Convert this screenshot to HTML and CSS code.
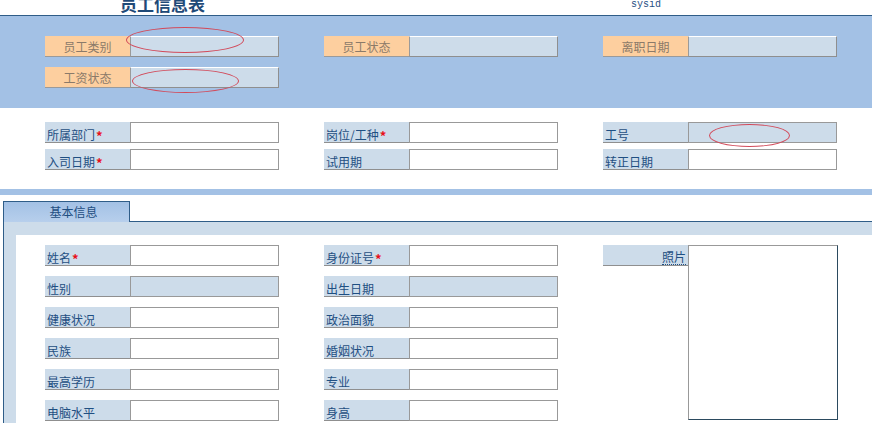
FILE: index.html
```html
<!DOCTYPE html>
<html lang="zh">
<head>
<meta charset="utf-8">
<link rel="stylesheet" href="styles.css">
</head>
<body>
<div class="header">
  <div class="title">员工信息表</div>
  <div class="sysid">sysid</div>
</div>
<div class="band">
  <div class="grid">
    <div class="field"><div class="hlabel">员工类别</div><div class="hinput"></div></div>
    <div class="field"><div class="hlabel">员工状态</div><div class="hinput"></div></div>
    <div class="field"><div class="hlabel">离职日期</div><div class="hinput"></div></div>
    <div class="field"><div class="hlabel">工资状态</div><div class="hinput"></div></div>
  </div>
</div>
<div class="main">
  <div class="grid tight">
    <div class="field"><div class="label">所属部门<span class="req">*</span></div><div class="input"></div></div>
    <div class="field"><div class="label">岗位/工种<span class="req">*</span></div><div class="input"></div></div>
    <div class="field"><div class="label">工号</div><div class="input ro"></div></div>
    <div class="field"><div class="label">入司日期<span class="req">*</span></div><div class="input"></div></div>
    <div class="field"><div class="label">试用期</div><div class="input"></div></div>
    <div class="field"><div class="label">转正日期</div><div class="input"></div></div>
  </div>
</div>
<div class="stripe"></div>
<div class="tabs">
  <div class="tabbar">
    <div class="tab">基本信息</div>
    <div class="tabline"></div>
  </div>
  <div class="panel">
    <div class="inner">
      <div class="grid rows">
        <div class="field"><div class="label">姓名<span class="req">*</span></div><div class="input"></div></div>
        <div class="field"><div class="label">身份证号<span class="req">*</span></div><div class="input"></div></div>
        <div class="photo"><div class="label plabel"><span class="dot">照片</span></div><div class="photobox"></div></div>
        <div class="field"><div class="label">性别</div><div class="input ro"></div></div>
        <div class="field"><div class="label">出生日期</div><div class="input ro"></div></div>
        <div class="field"><div class="label">健康状况</div><div class="input"></div></div>
        <div class="field"><div class="label">政治面貌</div><div class="input"></div></div>
        <div class="field"><div class="label">民族</div><div class="input"></div></div>
        <div class="field"><div class="label">婚姻状况</div><div class="input"></div></div>
        <div class="field"><div class="label">最高学历</div><div class="input"></div></div>
        <div class="field"><div class="label">专业</div><div class="input"></div></div>
        <div class="field"><div class="label">电脑水平</div><div class="input"></div></div>
        <div class="field"><div class="label">身高</div><div class="input"></div></div>
      </div>
    </div>
  </div>
</div>
<div class="mark m1"></div>
<div class="mark m2"></div>
<div class="mark m3"></div>
</body>
</html>
```
FILE: styles.css
```css
html, body {
  margin: 0;
  padding: 0;
  background: #ffffff;
  overflow: hidden;
}
body {
  position: relative;
  width: 872px;
  height: 423px;
  font-family: "Noto Sans CJK SC", "Liberation Sans", sans-serif;
  font-size: 12px;
  color: #1f4f82;
}
.header {
  height: 15px;
  border-bottom: 1px solid #2f5d88;
  display: flex;
  align-items: flex-start;
  overflow: hidden;
}
.title {
  margin-left: 120px;
  width: 100px;
  font-size: 17px;
  font-weight: bold;
  line-height: 17px;
  margin-top: -5px;
  color: #1f4a78;
  white-space: nowrap;
}
.sysid {
  margin-left: 411px;
  font-family: "Liberation Mono", "DejaVu Sans Mono", monospace;
  font-size: 10px;
  line-height: 10px;
  margin-top: 0;
  color: #1f4f82;
}
.band {
  background: #a3c1e5;
  height: 92px;
  padding-top: 20px;
  box-sizing: border-box;
}
.grid {
  display: grid;
  grid-template-columns: 234px 234px 235px;
  column-gap: 45px;
  row-gap: 10px;
  padding-left: 45px;
  grid-auto-rows: 21px;
}
.field {
  display: flex;
  height: 21px;
}
.hlabel {
  width: 85px;
  height: 21px;
  box-sizing: border-box;
  background: #fdcf9f;
  border-bottom: 1px solid #9a9a9a;
  color: #8b7a69;
  text-align: center;
  line-height: 21px;
}
.hinput {
  width: 149px;
  height: 21px;
  box-sizing: border-box;
  background: #cddcea;
  border-top: 1px solid #ffffff;
  border-left: 1px solid #9a9a9a;
  border-right: 1px solid #8f8f8f;
  border-bottom: 1px solid #8f8f8f;
}
.main {
  height: 81px;
  padding-top: 14px;
  box-sizing: border-box;
}
.tight {
  row-gap: 6px;
}
.label {
  width: 85px;
  height: 21px;
  box-sizing: border-box;
  background: #cddcea;
  border-bottom: 1px solid #8f8f8f;
  color: #1f4f82;
  padding-left: 2px;
  display: flex;
  align-items: flex-end;
  line-height: 15px;
  white-space: nowrap;
}
.req {
  color: #e8101a;
  font-weight: bold;
  font-size: 13px;
  margin-left: 1px;
  position: relative;
  top: 1px;
}
.input {
  width: 149px;
  height: 21px;
  box-sizing: border-box;
  background: #ffffff;
  border: 1px solid #999999;
}
.input.ro {
  background: #cddcea;
}
.stripe {
  height: 6px;
  background: #a3c1e5;
}
.tabs {
  margin-top: 6px;
  margin-left: 3px;
}
.tabbar {
  display: flex;
  height: 21px;
}
.tab {
  width: 127px;
  height: 21px;
  box-sizing: border-box;
  border: 1px solid #2f5d88;
  border-bottom: none;
  background: linear-gradient(#a3c1e5, #b7cfec);
  color: #1f4f82;
  text-align: center;
  padding-left: 14px;
  line-height: 20px;
}
.tabline {
  flex: 1;
  border-bottom: 1px solid #2f5d88;
}
.panel {
  background: #cddcea;
  border-left: 1px solid #2f5d88;
  padding: 13px 0 0 12px;
  height: 201px;
  box-sizing: border-box;
}
.inner {
  background: #ffffff;
  height: 100%;
  padding-top: 10px;
  box-sizing: border-box;
  overflow: hidden;
}
.rows {
  padding-left: 29px;
}
.photo {
  grid-column: 3;
  grid-row: 1 / span 6;
  display: flex;
  align-items: flex-start;
}
.plabel {
  justify-content: flex-end;
  padding-left: 0;
  padding-right: 2px;
}
.dot {
  border-bottom: 1px dotted #1f4f82;
  line-height: 14px;
}
.photobox {
  width: 150px;
  height: 175px;
  box-sizing: border-box;
  border-top: 1px solid #999999;
  border-left: 1px solid #999999;
  border-right: 1px solid #2b4a5f;
  border-bottom: 1px solid #2b4a5f;
  background: #ffffff;
}
.mark {
  position: absolute;
  border: 1px solid #d24a5a;
  border-radius: 50%;
  box-sizing: border-box;
}
.m1 { left: 126px; top: 27px; width: 118px; height: 26px; }
.m2 { left: 132px; top: 69px; width: 107px; height: 24px; }
.m3 { left: 709px; top: 124px; width: 81px; height: 23px; }
```
